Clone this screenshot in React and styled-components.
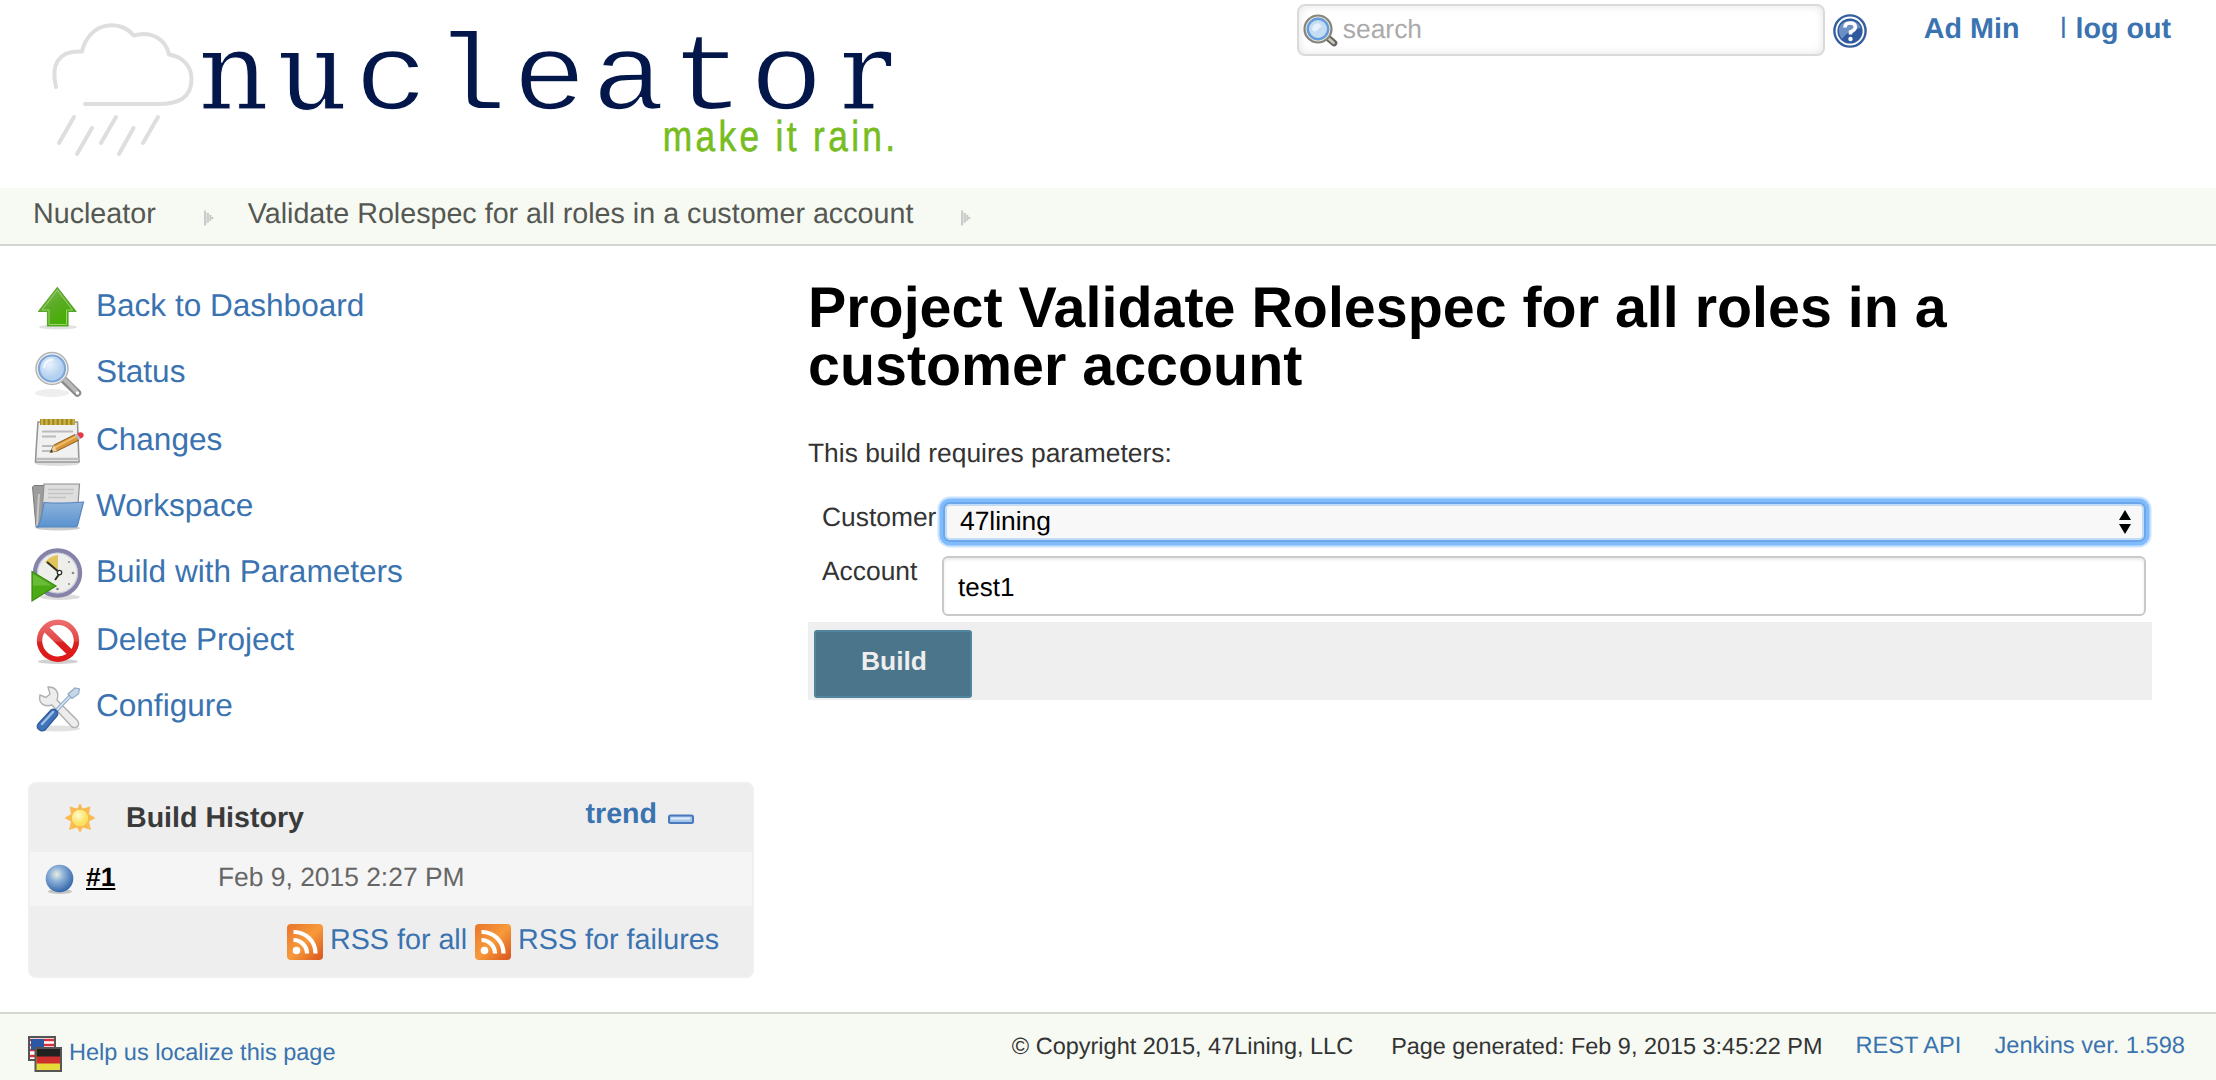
import React from 'react';
import styled, { createGlobalStyle } from 'styled-components';

const Global = createGlobalStyle`
  * { box-sizing: border-box; }
  body {
    margin: 0;
    background: #fff;
    color: #333;
    font-family: "Liberation Sans", Arial, Helvetica, sans-serif;
    text-rendering: geometricPrecision;
  }
`;

const Page = styled.div`
  display: flex;
  flex-direction: column;
  width: 2216px;
  height: 1080px;
  overflow: hidden;
`;

const Link = styled.a`
  color: #3a73b0;
  text-decoration: none;
  white-space: nowrap;
  font-weight: ${(p) => (p.$bold ? 700 : 400)};
`;

/* ---------- header ---------- */
const Header = styled.header`
  display: flex;
  justify-content: space-between;
  height: 188px;
  padding-right: 45px;
`;
const Brand = styled.div`
  display: flex;
`;
const BrandText = styled.div`
  display: flex;
  flex-direction: column;
  width: 711px;
  padding-top: 22px;
`;
const Wordmark = styled.div`
  display: grid;
  grid-template-columns: repeat(9, 79px);
  align-items: baseline;
  height: 93px;
  line-height: 100px;
  color: #04174a;
  font-size: 109px;
`;
const Glyph = styled.span`
  display: flex;
  justify-content: center;
  width: 79px;
  font-family: ${(p) => (p.$slab ? '"DejaVu Serif", serif' : '"Liberation Mono", monospace')};
  -webkit-text-stroke: ${(p) => (p.$slab ? '1px' : '1.8px')} #fff;
  transform: scaleX(${(p) => (p.$slab ? 1 : 1.13)});
`;
const Tagline = styled.div`
  align-self: flex-end;
  margin-right: 7px;
  color: #77bd1f;
  font-size: 43px;
  line-height: 44px;
  letter-spacing: 4.1px;
  white-space: nowrap;
  -webkit-text-stroke: 0.6px #77bd1f;
  transform: scaleX(0.82);
  transform-origin: right;
`;
const Tools = styled.div`
  display: flex;
  align-items: flex-start;
  padding-top: 4px;
  font-size: 28.7px;
  line-height: 32px;
`;
const SearchBox = styled.div`
  display: flex;
  align-items: flex-start;
  width: 528px;
  height: 52px;
  padding: 8px 0 0 4px;
  border: 2px solid #dadada;
  border-radius: 8px;
  box-shadow: inset 0 0 10px #e4e4e4;
  color: #aaa;
  font-size: 26.4px;
  line-height: 30px;
  svg { margin-right: 5px; }
`;
const HelpSlot = styled.div`
  margin: 10px 57px 0 8px;
  width: 34px;
  height: 34px;
`;
const UserLink = styled(Link)`
  padding-top: 9px;
`;
const Divider = styled.span`
  width: 6px;
  margin: 6px 9px 0 41px;
  color: #3a73b0;
  font-size: 22px;
  line-height: 32px;
  -webkit-text-stroke: 0.6px #3a73b0;
`;

/* ---------- breadcrumb ---------- */
const Crumbs = styled.nav`
  display: flex;
  height: 58px;
  padding: 10px 0 0 33px;
  background: #f6faf2;
  border-bottom: 2px solid #d3d7cf;
  color: #555753;
  font-size: 28.68px;
  line-height: 32px;
`;
const Crumb = styled.span`
  white-space: nowrap;
`;
const CrumbArrow = styled.svg`
  margin: 12px ${(p) => (p.$last ? 0 : 34)}px 0 48px;
`;

/* ---------- body ---------- */
const Body = styled.div`
  display: flex;
  height: 766px;
`;
const Side = styled.aside`
  width: 808px;
  padding: 36px 54px 0 28px;
`;
const NavList = styled.ul`
  list-style: none;
  margin: 0 0 34px;
  padding: 0 0 0 4px;
`;
const NavItem = styled.li`
  display: flex;
  align-items: flex-start;
  gap: 12px;
  height: 66px;
  &:nth-child(3n + 2) { height: 68px; }
  svg { overflow: visible; }
`;
const NavLink = styled(Link)`
  padding-top: 5px;
  font-size: 31.55px;
  line-height: 36px;
`;

const History = styled.section`
  width: 726px;
  height: 196px;
  border: 2px solid #f0f0f0;
  border-radius: 8px;
  background: #eee;
`;
const HistoryHead = styled.div`
  display: flex;
  height: 68px;
  padding: 18px 58px 0 34px;
  font-size: 28.6px;
  line-height: 32px;
`;
const HistoryTitle = styled.strong`
  flex: 1;
  margin-left: 30px;
  color: #3a3a3a;
`;
const Trend = styled.div`
  display: flex;
  gap: 11px;
  margin-top: -4px;
`;
const BuildRow = styled.div`
  display: flex;
  height: 54px;
  padding: 10px 0 0 15px;
  background: #f5f5f5;
  color: #666;
  font-size: 26.4px;
  line-height: 30px;
`;
const BuildNo = styled.span`
  width: 132px;
  margin-left: 11px;
  color: #000;
  font-weight: 700;
  text-decoration: underline;
  text-decoration-thickness: 2px;
  text-underline-offset: 2px;
`;
const Feeds = styled.div`
  display: flex;
  justify-content: flex-end;
  padding: 18px 33px 0 0;
  font-size: 28.7px;
  line-height: 32px;
`;
const Feed = styled(Link)`
  display: flex;
  gap: 7px;
  margin-left: 8px;
`;

const Main = styled.main`
  width: 1344px;
  padding-top: 33px;
`;
const Title = styled.h1`
  margin: 0;
  color: #000;
  font-size: 57.4px;
  line-height: 58px;
`;
const Note = styled.p`
  margin: 43px 0 0;
  font-size: 26.4px;
  line-height: 30px;
`;
const Row = styled.div`
  display: flex;
  align-items: flex-start;
  padding-left: 14px;
  margin-top: ${(p) => p.$top}px;
  font-size: 26.4px;
  line-height: 30px;
`;
const Label = styled.label`
  width: ${(p) => p.$w}px;
`;
const Select = styled.div`
  display: flex;
  justify-content: space-between;
  width: 1203px;
  height: 40px;
  padding: 2px 13px 0 15px;
  border: 2px solid #6ca8e9;
  border-radius: 7px;
  background: #f8f8f8;
  box-shadow: inset 0 0 0 2px #c3dcf5, 0 0 0 3.5px #80bbfd, 0 0 0 5.5px #cbe3fd;
  color: #000;
  svg { margin-top: 4px; }
`;
const Field = styled.div`
  width: 1204px;
  height: 60px;
  padding: 14px 0 0 14px;
  border: 2px solid #c9c9c9;
  border-radius: 6px;
  box-shadow: inset 0 2px 3px #eaeaea;
  color: #000;
  font-size: 26px;
`;
const Actions = styled.div`
  height: 78px;
  margin-top: 6px;
  padding: 8px 6px;
  background: #efefef;
`;
const Button = styled.button`
  display: block;
  width: 158px;
  height: 68px;
  padding: 0 0 7px 2px;
  border: 2px solid #4f859e;
  border-radius: 3px;
  background: #4b758b;
  color: #eee;
  font: 700 26.4px/30px "Liberation Sans", Arial, sans-serif;
`;

/* ---------- footer ---------- */
const Footer = styled.footer`
  display: flex;
  justify-content: space-between;
  height: 68px;
  padding: 0 31px 0 28px;
  border-top: 2px solid #d3d7cf;
  background: #f6faf2;
  font-size: 23.6px;
  line-height: 26px;
`;
const Localize = styled(Link)`
  display: flex;
  gap: 6px;
  padding-top: 22px;
  font-size: 23.5px;
  span { padding-top: 3px; }
`;
const Legal = styled.div`
  display: flex;
  padding-top: 19px;
  white-space: nowrap;
`;
const LegalItem = styled.span`
  margin-left: ${(p) => p.$gap}px;
  font-size: ${(p) => p.$size || 23.65}px;
`;

/* ---------- drawings ---------- */
const Cloud = () => (
  <svg width="194" height="188" viewBox="0 0 194 188" fill="none" stroke="#dedede" strokeWidth="4" strokeLinecap="round" strokeLinejoin="round">
    <path d="M56 87C51 66 57 50 82 51.500C89 21 121 19 133.500 35.500C152 30 166 40 169 54.500C184 57 191.500 67 191.500 79C191.500 99 177 104 158 104H85" />
    <path d="M74 117L59 143M92 128L77 154M116 117L101 143M133.500 128L119 154M158 117L143 143" />
  </svg>
);

const Lens = ({ size = 52 }) => (
  <svg width={size} height={size} viewBox="0 0 52 52">
    <defs>
      <radialGradient id="glass" cx=".4" cy=".35"><stop offset="0" stopColor="#eaf3fd" /><stop offset="1" stopColor="#b3d0f0" /></radialGradient>
    </defs>
    <ellipse cx="20" cy="45" rx="17" ry="4" fill="#eee" />
    <path d="M32 32L45.500 45" stroke="#8a8a8a" strokeWidth="7.500" strokeLinecap="round" />
    <path d="M32 31L44 43" stroke="#b9b9b9" strokeWidth="4" strokeLinecap="round" />
    <circle cx="45.500" cy="45" r="1.800" fill="#fff" />
    <circle cx="20" cy="20.500" r="16" fill="#f1f1f1" stroke="#b4b4b4" strokeWidth="1.500" />
    <circle cx="20" cy="20.500" r="13" fill="url(#glass)" stroke="#7ea6d8" strokeWidth="2.200" />
    <path d="M12 20Q13 12 21 11.500" stroke="#fff" strokeWidth="2" fill="none" opacity=".7" />
  </svg>
);

const SearchLens = () => (
  <svg width="35" height="34" viewBox="0 0 35 34">
    <path d="M24 23L31 29" stroke="#66645c" strokeWidth="6.600" strokeLinecap="round" />
    <path d="M25 24L30.500 28.800" stroke="#c9c7c0" strokeWidth="2.800" strokeLinecap="round" />
    <circle cx="15" cy="15" r="13.500" fill="#e8e5dc" stroke="#85837a" strokeWidth="2.200" />
    <circle cx="15" cy="15" r="10.200" fill="#c5dcf5" stroke="#649cdc" strokeWidth="2.400" />
    <path d="M9 16Q9 10 15 9L19 12L12 18Z" fill="#e6f1fc" />
  </svg>
);

const Help = () => (
  <svg width="34" height="34" viewBox="0 0 34 34">
    <circle cx="17" cy="17" r="15.600" fill="#fff" stroke="#345f9f" strokeWidth="2.400" />
    <circle cx="17" cy="17" r="12.600" fill="#2f5b9e" />
    <path d="M6 14A12 12 0 0 1 28 14Q16 15 9 25Q5 20 6 14Z" fill="#6c90c4" />
    <path d="M12 13.500Q12 9 17 9Q22.300 9 22.300 13Q22.300 16 17.500 18V20.500" fill="none" stroke="#fff" strokeWidth="3.600" />
    <circle cx="17.500" cy="25" r="2.200" fill="#fff" />
  </svg>
);

const UpArrow = () => (
  <svg width="52" height="52" viewBox="0 0 52 52">
    <defs><linearGradient id="green" x1="0" y1="0" x2=".6" y2="1"><stop offset="0" stopColor="#8fc060" /><stop offset=".5" stopColor="#5cab27" /><stop offset="1" stopColor="#43ae00" /></linearGradient></defs>
    <ellipse cx="26" cy="45" rx="19" ry="2.500" fill="#e2e2e2" />
    <path d="M25.300 5.500L44 29.500H36V44H15.500V29.500H6.500Z" fill="url(#green)" stroke="#5aa52e" strokeWidth="1.200" strokeLinejoin="round" />
    <path d="M25.300 8L40.500 28H34.500V42.500H17V28H10Z" fill="none" stroke="#9bd46e" strokeWidth="1" />
  </svg>
);

const Notepad = () => (
  <svg width="52" height="52" viewBox="0 0 52 52">
    <ellipse cx="25" cy="47.500" rx="22" ry="2.500" fill="#ddd" />
    <path d="M6 6H45.500L47 46H3.500Q4 35 6 6Z" fill="#f1f1f1" stroke="#969696" strokeWidth="1.600" />
    <path d="M4 43H47" stroke="#bdbdbd" strokeWidth="2.500" />
    <rect x="8" y="3" width="35" height="6" fill="#a08a26" />
    <path d="M10 3V9M14.500 3V9M19 3V9M23.500 3V9M28 3V9M32.500 3V9M37 3V9M41.500 3V9" stroke="#cdb445" strokeWidth="2.200" />
    <path d="M10 15.500H41M10 20.500H24M10 30H30M10 35H20" stroke="#bcbcbc" strokeWidth="1.800" />
    <path d="M18 36.500L22 29L43 18.500L47 24L25 35Z" fill="#d9963a" stroke="#8a5a1c" strokeWidth="1" />
    <path d="M23 31.500L45 20" stroke="#f2c06c" strokeWidth="1.800" />
    <path d="M18 36.500L22 29L25 35Z" fill="#e9cfa0" /><path d="M18 36.500L19.700 33.300L21 35.800Z" fill="#333" />
    <path d="M42.500 18.700L45 17.500L48.500 22.800L46.500 24Z" fill="#b9bcc2" />
    <path d="M45 17.500Q50 15 51.500 18Q52.500 21 48.500 22.800Z" fill="#e63946" />
  </svg>
);

const Folder = () => (
  <svg width="52" height="52" viewBox="0 0 52 52">
    <defs><linearGradient id="fold" x1="0" y1="0" x2="0" y2="1"><stop offset="0" stopColor="#8db3dd" /><stop offset="1" stopColor="#5b92cf" /></linearGradient></defs>
    <ellipse cx="26" cy="46" rx="22" ry="2.500" fill="#ccc" />
    <path d="M0.500 5L2 3.500H13L15 5V30L7 45H4Z" fill="#9d9d9d" stroke="#7a7a7a" strokeWidth="1" />
    <path d="M12 2H47.500L46 22L10 30Z" fill="#dedede" stroke="#8e8e8e" strokeWidth="1.200" />
    <path d="M16 7.500H42M16 11.500H41M16 15.500H34" stroke="#c3c3c3" strokeWidth="1.600" />
    <path d="M7 12L5 44" stroke="#c9c9c9" strokeWidth="2" />
    <path d="M12 20.500Q30 22 51.500 20L45.500 43.500Q45 45 43 45H5Q9 42 12 20.500Z" fill="url(#fold)" stroke="#5587c0" strokeWidth="1.200" />
  </svg>
);

const Clock = () => (
  <svg width="52" height="54" viewBox="0 0 52 54">
    <ellipse cx="28" cy="49" rx="20" ry="3" fill="#ddd" />
    <circle cx="25.500" cy="25" r="22.500" fill="#eeeeea" stroke="#8583a8" strokeWidth="4.400" />
    <circle cx="25.500" cy="25" r="20" fill="none" stroke="#c9c8da" strokeWidth="1.200" />
    <path d="M26 24L13 14Q18 8 26 7Z" fill="#e2c45c" />
    <path d="M15 14L28 25M28 25L23 32" stroke="#2e2e2e" strokeWidth="2" fill="none" />
    <circle cx="27.500" cy="24.500" r="2.200" fill="#fff" stroke="#333" strokeWidth="1.300" />
    <g fill="#888"><circle cx="41" cy="25" r="1.300" /><circle cx="25.500" cy="41" r="1.300" /><circle cx="37" cy="14" r="1" /><circle cx="37" cy="36" r="1" /></g>
    <path d="M0 23.500L24 38L0 53Z" fill="#4cab14" stroke="#3b8a12" strokeWidth="1.200" />
    <path d="M1 26L20 37.500L1 37.500Z" fill="#7cc850" opacity=".6" />
  </svg>
);

const Forbid = () => (
  <svg width="52" height="52" viewBox="0 0 52 52">
    <defs><linearGradient id="red" x1="0" y1="0" x2="0" y2="1"><stop offset="0" stopColor="#ee6f6f" /><stop offset=".5" stopColor="#e04848" /><stop offset=".55" stopColor="#d81f1f" /><stop offset="1" stopColor="#e01818" /></linearGradient></defs>
    <ellipse cx="26" cy="45.500" rx="20" ry="2.500" fill="#d0d0d0" />
    <path fillRule="evenodd" d="M26 3.500A21.200 21.200 0 1 0 26 45.900A21.200 21.200 0 1 0 26 3.500ZM17.500 11.500A15.800 15.800 0 0 1 39.500 33ZM12.500 16.500L34.500 38A15.800 15.800 0 0 1 12.500 16.500Z" fill="url(#red)" />
  </svg>
);

const WrenchDriver = () => (
  <svg width="52" height="52" viewBox="0 0 52 52">
    <ellipse cx="26" cy="46.500" rx="22" ry="3" fill="#e2e2e2" />
    <path d="M16 5L18 12L14 15.500L8 13Q6 20 12 23Q16 24.500 20 23L39 44Q42 47 45.500 44.500Q48 41.500 45 38L25 18Q27 12 24 8Q21 4.500 16 5Z" fill="#ededed" stroke="#b0b0b0" strokeWidth="1.400" />
    <path d="M24 29L39 13" stroke="#8ea9c9" strokeWidth="3.600" /><path d="M24 29L39 13" stroke="#dbe7f4" strokeWidth="1.600" />
    <path d="M36 12L43 6L47.500 7L46.500 12L40 16.500Z" fill="#c6d7ea" stroke="#93aac6" strokeWidth="1.200" />
    <path d="M6 42L19 28Q22 26 25 29Q27 32 24.500 34.500L13 48Q10 50 7 47.500Q4 45 6 42Z" fill="#3f74bb" stroke="#2d5a9b" strokeWidth="1.200" />
    <path d="M10 42L21 30" stroke="#9dbfe8" strokeWidth="2.400" strokeLinecap="round" />
  </svg>
);

const Sun = () => (
  <svg width="32" height="32" viewBox="0 0 32 32">
    <defs><radialGradient id="sun" cx=".4" cy=".35"><stop offset="0" stopColor="#fffbd0" /><stop offset="1" stopColor="#fbe05c" /></radialGradient></defs>
    <path d="M16 1L18.600 6.500L26.500 4.500L25 12L31.500 16L25 19.500L27 28L18.800 25.500L16 31L13.200 25.500L5 28L7 19.500L.5 16L7 12L5.500 4.500L13.400 6.500Z" fill="#fabb55" />
    <circle cx="16" cy="16" r="8.800" fill="url(#sun)" stroke="#f8b84a" strokeWidth="1" />
  </svg>
);

const Ball = () => (
  <svg width="30" height="34" viewBox="0 0 30 34">
    <defs><radialGradient id="ball" cx=".4" cy=".35" r=".65"><stop offset="0" stopColor="#e9eee0" /><stop offset=".4" stopColor="#8db0d8" /><stop offset="1" stopColor="#3668ac" /></radialGradient></defs>
    <ellipse cx="15" cy="29.500" rx="12" ry="2.500" fill="#c4c4c4" />
    <circle cx="14.500" cy="16.500" r="13.800" fill="url(#ball)" />
  </svg>
);

const Minus = () => (
  <svg width="26" height="36" viewBox="0 0 26 36">
    <rect x="1" y="17.500" width="24" height="7.500" rx="1.500" fill="#a9c6ea" stroke="#4a79bd" strokeWidth="2" />
    <rect x="3" y="19.500" width="19" height="2" fill="#e0edfa" />
  </svg>
);

const Rss = () => (
  <svg width="36" height="36" viewBox="0 0 36 36">
    <defs><linearGradient id="rss" x1="0" y1="0" x2="1" y2="1"><stop offset="0" stopColor="#e8742c" /><stop offset=".5" stopColor="#f79a3a" /><stop offset="1" stopColor="#d9541d" /></linearGradient></defs>
    <rect width="36" height="36" rx="4" fill="url(#rss)" />
    <circle cx="9.500" cy="26.500" r="3.800" fill="#fff" />
    <path d="M6.500 16A13.500 13.500 0 0 1 20 29.500M6.500 8A21.500 21.500 0 0 1 28.500 29.500" fill="none" stroke="#fff" strokeWidth="4.200" />
  </svg>
);

const Flags = () => (
  <svg width="35" height="36" viewBox="0 0 35 36">
    <rect x="1" y="1" width="26" height="23" fill="#fff" stroke="#555" strokeWidth="2" />
    <path d="M2 4H26M2 9H26M2 14H26M2 20H26" stroke="#d8323c" strokeWidth="2.400" />
    <rect x="3" y="3" width="13" height="11" fill="#2c57a5" />
    <rect x="7.500" y="12" width="25.500" height="23" fill="#e7d93a" stroke="#555" strokeWidth="2" />
    <rect x="8.500" y="13" width="23.500" height="8" fill="#222" />
    <rect x="8.500" y="20.500" width="23.500" height="7" fill="#cf2e2e" />
  </svg>
);

const Sorter = () => (
  <svg width="12" height="26" viewBox="0 0 12 26">
    <path d="M6 0L12 10H0ZM6 24L0 14H12Z" fill="#000" />
  </svg>
);

const Chevron = ({ last }) => (
  <CrumbArrow $last={last} width="10" height="16" viewBox="0 0 10 16">
    <path d="M1 .5V15.500M4 3V12.500M6.500 5V10.500M8.500 7V9" stroke="#bcbcbc" strokeWidth="1.500" />
    <path d="M1 1L9 8L1 15Z" fill="#cfcfcf" opacity=".6" />
  </CrumbArrow>
);

const letters = [...'nucleator'];
const nav = [
  ['Back to Dashboard', UpArrow],
  ['Status', Lens],
  ['Changes', Notepad],
  ['Workspace', Folder],
  ['Build with Parameters', Clock],
  ['Delete Project', Forbid],
  ['Configure', WrenchDriver],
];

export default function App() {
  return (
    <Page>
      <Global />
      <Header>
        <Brand>
          <Cloud />
          <BrandText>
            <Wordmark>
              {letters.map((c, i) => (
                <Glyph key={i} $slab={'nur'.includes(c)}>{c}</Glyph>
              ))}
            </Wordmark>
            <Tagline>make it rain.</Tagline>
          </BrandText>
        </Brand>
        <Tools>
          <SearchBox><SearchLens /><span>search</span></SearchBox>
          <HelpSlot><Help /></HelpSlot>
          <UserLink $bold>Ad Min</UserLink>
          <Divider>|</Divider>
          <UserLink $bold>log out</UserLink>
        </Tools>
      </Header>
      <Crumbs>
        <Crumb>Nucleator</Crumb>
        <Chevron />
        <Crumb>Validate Rolespec for all roles in a customer account</Crumb>
        <Chevron last />
      </Crumbs>
      <Body>
        <Side>
          <NavList>
            {nav.map(([label, Icon]) => (
              <NavItem key={label}><Icon /><NavLink>{label}</NavLink></NavItem>
            ))}
          </NavList>
          <History>
            <HistoryHead>
              <Sun />
              <HistoryTitle>Build History</HistoryTitle>
              <Trend><Link $bold>trend</Link><Minus /></Trend>
            </HistoryHead>
            <BuildRow><Ball /><BuildNo><span>#1</span></BuildNo><span>Feb 9, 2015 2:27 PM</span></BuildRow>
            <Feeds>
              <Feed><Rss /><span>RSS for all</span></Feed>
              <Feed><Rss /><span>RSS for failures</span></Feed>
            </Feeds>
          </History>
        </Side>
        <Main>
          <Title>Project Validate Rolespec for all roles in a customer account</Title>
          <Note>This build requires parameters:</Note>
          <Row $top={34}>
            <Label $w={121}>Customer</Label>
            <Select><span>47lining</span><Sorter /></Select>
          </Row>
          <Row $top={14}>
            <Label $w={120}>Account</Label>
            <Field>test1</Field>
          </Row>
          <Actions><Button>Build</Button></Actions>
        </Main>
      </Body>
      <Footer>
        <Localize><Flags /><span>Help us localize this page</span></Localize>
        <Legal>
          <LegalItem $gap={0} $size={23.5}>© Copyright 2015, 47Lining, LLC</LegalItem>
          <LegalItem $gap={38} $size={23.45}>Page generated: Feb 9, 2015 3:45:22 PM</LegalItem>
          <LegalItem $gap={33}><Link>REST API</Link></LegalItem>
          <LegalItem $gap={33}><Link>Jenkins ver. 1.598</Link></LegalItem>
        </Legal>
      </Footer>
    </Page>
  );
}
